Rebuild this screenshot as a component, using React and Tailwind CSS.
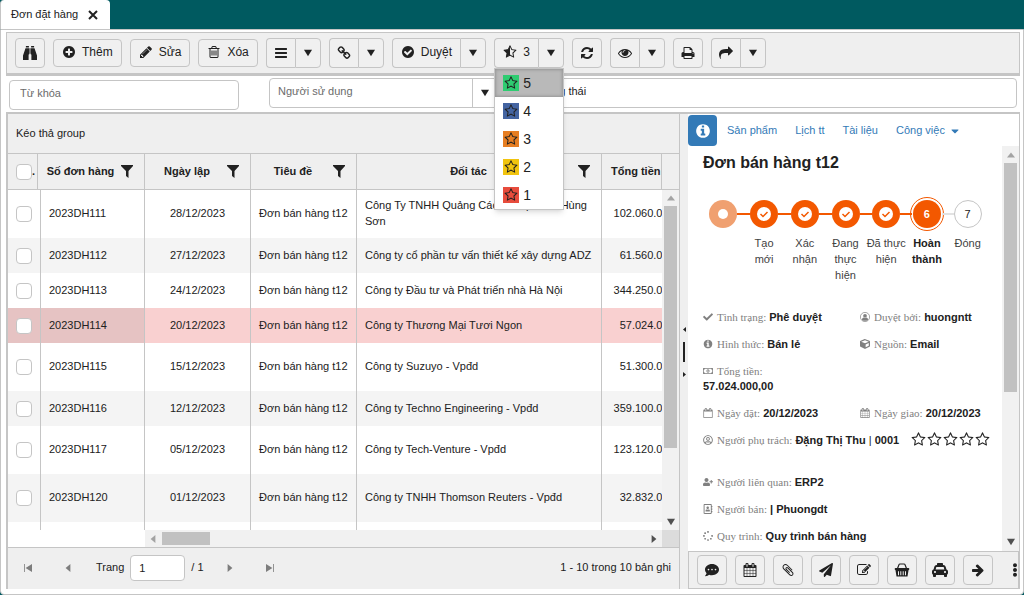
import { useState } from 'react';
import {
  FaCommentDots, FaPaperPlane, FaTaxi, FaEllipsisV,
  FaCheck, FaCube, FaUserPlus, FaSpinner, FaRegUserCircle,
  FaRegAddressBook, FaRegMoneyBillAlt, FaCaretDown
} from 'react-icons/fa';

const PATHS = {
  plus: "M1344 960v-128q0-26-19-45t-45-19h-256v-256q0-26-19-45t-45-19h-128q-26 0-45 19t-19 45v256h-256q-26 0-45 19t-19 45v128q0 26 19 45t45 19h256v256q0 26 19 45t45 19h128q26 0 45-19t19-45v-256h256q26 0 45-19t19-45zm320-64q0 209-103 385.5t-279.5 279.5-385.5 103-385.5-103-279.5-279.5-103-385.5 103-385.5 279.5-279.5 385.5-103 385.5 103 279.5 279.5 103 385.5z",
  pencil: "M491 1536l91-91-235-235-91 91v107h128v128h107zm523-928q0-22-22-22-10 0-17 7l-542 542q-7 7-7 17 0 22 22 22 10 0 17-7l542-542q7-7 7-17zm-54-192l416 416-832 832h-416v-416zm683 96q0 53-37 90l-166 166-416-416 166-165q36-38 90-38 53 0 91 38l235 234q37 39 37 91z",
  trash: "M704 736v576q0 14-9 23t-23 9h-64q-14 0-23-9t-9-23v-576q0-14 9-23t23-9h64q14 0 23 9t9 23zm256 0v576q0 14-9 23t-23 9h-64q-14 0-23-9t-9-23v-576q0-14 9-23t23-9h64q14 0 23 9t9 23zm256 0v576q0 14-9 23t-23 9h-64q-14 0-23-9t-9-23v-576q0-14 9-23t23-9h64q14 0 23 9t9 23zm128 724v-948h-896v948q0 22 7 40.5t14.5 27 10.5 8.5h832q3 0 10.5-8.5t14.5-27 7-40.5zm-672-1076h448l-48-117q-7-9-17-11h-317q-10 2-17 11zm928 32v64q0 14-9 23t-23 9h-96v948q0 83-47 143.5t-113 60.5h-832q-66 0-113-58.5t-47-141.5v-952h-96q-14 0-23-9t-9-23v-64q0-14 9-23t23-9h309l70-167q15-37 54-63t79-26h320q40 0 79 26t54 63l70 167h309q14 0 23 9t9 23z",
  bars: "M1664 1344v128q0 26-19 45t-45 19h-1408q-26 0-45-19t-19-45v-128q0-26 19-45t45-19h1408q26 0 45 19t19 45zm0-512v128q0 26-19 45t-45 19h-1408q-26 0-45-19t-19-45v-128q0-26 19-45t45-19h1408q26 0 45 19t19 45zm0-512v128q0 26-19 45t-45 19h-1408q-26 0-45-19t-19-45v-128q0-26 19-45t45-19h1408q26 0 45 19t19 45z",
  link: "M1520 1216q0-40-28-68l-208-208q-28-28-68-28-42 0-72 32 3 3 19 18.5t21.5 21.5 15 19 13 25.5 3.5 27.5q0 40-28 68t-68 28q-15 0-27.5-3.5t-25.5-13-19-15-21.5-21.5-18.5-19q-33 31-33 73 0 40 28 68l206 207q27 27 68 27 40 0 68-26l147-146q28-28 28-67zm-703-705q0-40-28-68l-206-207q-28-28-68-28-39 0-68 27l-147 146q-28 28-28 67 0 40 28 68l208 208q27 27 68 27 42 0 72-31-3-3-19-18.5t-21.5-21.5-15-19-13-25.5-3.5-27.5q0-40 28-68t68-28q15 0 27.5 3.5t25.5 13 19 15 21.5 21.5 18.5 19q33-31 33-73zm895 705q0 120-85 203l-147 146q-83 83-203 83-121 0-204-85l-206-207q-83-83-83-203 0-123 88-209l-88-88q-86 88-208 88-120 0-204-84l-208-208q-84-84-84-204t85-203l147-146q83-83 203-83 121 0 204 85l206 207q83 83 83 203 0 123-88 209l88 88q86-88 208-88 120 0 204 84l208 208q84 84 84 204z",
  check: "M1412 734q0-28-18-46l-91-90q-19-19-45-19t-45 19l-408 407-226-226q-19-19-45-19t-45 19l-91 90q-18 18-18 46 0 27 18 45l362 362q19 19 45 19 27 0 46-19l543-543q18-18 18-45zm252 162q0 209-103 385.5t-279.5 279.5-385.5 103-385.5-103-279.5-279.5-103-385.5 103-385.5 279.5-279.5 385.5-103 385.5 103 279.5 279.5 103 385.5z",
  refresh: "M1639 1056q0 5-1 7-64 268-268 434.5t-478 166.5q-146 0-282.5-55t-243.5-157l-129 129q-19 19-45 19t-45-19-19-45v-448q0-26 19-45t45-19h448q26 0 45 19t19 45-19 45l-137 137q71 66 161 102t187 36q134 0 250-65t186-179q11-17 53-117 8-23 30-23h192q13 0 22.5 9.5t9.5 22.5zm25-800v448q0 26-19 45t-45 19h-448q-26 0-45-19t-19-45 19-45l138-138q-148-137-349-137-134 0-250 65t-186 179q-11 17-53 117-8 23-30 23h-199q-13 0-22.5-9.5t-9.5-22.5v-7q65-268 270-434.5t480-166.5q146 0 284 55.5t245 156.5l130-129q19-19 45-19t45 19 19 45z",
  eye: "M1664 960q-152-236-381-353 61 104 61 225 0 185-131.5 316.5t-316.5 131.5-316.5-131.5-131.5-316.5q0-121 61-225-229 117-381 353 133 205 333.5 326.5t434.5 121.5 434.5-121.5 333.5-326.5zm-720-384q0-20-14-34t-34-14q-125 0-214.5 89.5t-89.5 214.5q0 20 14 34t34 14 34-14 14-34q0-86 61-147t147-61q20 0 34-14t14-34zm848 384q0 34-20 69-140 230-376.5 368.5t-499.5 138.5-499.5-139-376.5-368q-20-35-20-69t20-69q140-229 376.5-368t499.5-139 499.5 139 376.5 368q20 35 20 69z",
  print: "M448 1536h896v-256h-896v256zm0-640h896v-384h-160q-40 0-68-28t-28-68v-160h-640v640zm1152 64q0-26-19-45t-45-19-45 19-19 45 19 45 45 19 45-19 19-45zm128 0v416q0 13-9.5 22.5t-22.5 9.5h-224v160q0 40-28 68t-68 28h-960q-40 0-68-28t-28-68v-160h-224q-13 0-22.5-9.5t-9.5-22.5v-416q0-79 56.5-135.5t135.5-56.5h64v-544q0-40 28-68t68-28h672q40 0 88 20t76 48l152 152q28 28 48 76t20 88v256h64q79 0 135.5 56.5t56.5 135.5z",
  share: "M1792 640q0 26-19 45l-512 512q-19 19-45 19t-45-19-19-45v-256h-224q-98 0-175.5 6t-154 21.5-133 42.5-105.5 69.5-80 101-48.5 138.5-17.5 181q0 55 5 123 0 6 2.5 23.5t2.5 26.5q0 15-8.5 25t-23.5 10q-16 0-28-17-7-9-13-22t-13.5-30-10.5-24q-127-285-127-451 0-199 53-333 162-403 875-403h224v-256q0-26 19-45t45-19 45 19l512 512q19 19 19 45z",
  star: "M1201 1004l306-297-422-62-189-382-189 382-422 62 306 297-73 421 378-199 377 199zm527-357q0 22-26 48l-363 354 86 500q1 7 1 20 0 50-41 50-19 0-40-12l-449-236-449 236q-22 12-40 12-21 0-31.5-14.5t-10.5-35.5q0-6 2-20l86-500-364-354q-25-27-25-48 0-37 56-46l502-73 225-455q19-41 49-41t49 41l225 455 502 73q56 9 56 46z",
  calendar: "M192 1664h288v-288h-288v288zm352 0h320v-288h-320v288zm-352-352h288v-320h-288v320zm352 0h320v-320h-320v320zm-352-384h288v-288h-288v288zm736 736h320v-288h-320v288zm-384-736h320v-288h-320v288zm768 736h288v-288h-288v288zm-384-352h320v-320h-320v320zm-352-864v-288q0-13-9.5-22.5t-22.5-9.5h-64q-13 0-22.5 9.5t-9.5 22.5v288q0 13 9.5 22.5t22.5 9.5h64q13 0 22.5-9.5t9.5-22.5zm736 864h288v-320h-288v320zm-384-384h320v-288h-320v288zm384 0h288v-288h-288v288zm32-480v-288q0-13-9.5-22.5t-22.5-9.5h-64q-13 0-22.5 9.5t-9.5 22.5v288q0 13 9.5 22.5t22.5 9.5h64q13 0 22.5-9.5t9.5-22.5zm384-64v1280q0 52-38 90t-90 38h-1408q-52 0-90-38t-38-90v-1280q0-52 38-90t90-38h128v-96q0-66 47-113t113-47h64q66 0 113 47t47 113v96h384v-96q0-66 47-113t113-47h64q66 0 113 47t47 113v96h128q52 0 90 38t38 90z",
  calendarO: "M192 1664h1408v-1024h-1408v1024zm384-1216v-288q0-14-9-23t-23-9h-64q-14 0-23 9t-9 23v288q0 14 9 23t23 9h64q14 0 23-9t9-23zm768 0v-288q0-14-9-23t-23-9h-64q-14 0-23 9t-9 23v288q0 14 9 23t23 9h64q14 0 23-9t9-23zm384-64v1280q0 52-38 90t-90 38h-1408q-52 0-90-38t-38-90v-1280q0-52 38-90t90-38h128v-96q0-66 47-113t113-47h64q66 0 113 47t47 113v96h384v-96q0-66 47-113t113-47h64q66 0 113 47t47 113v96h128q52 0 90 38t38 90z",
  clip: "M1596 1385q0 117-79 196t-196 79q-135 0-235-100l-777-776q-113-115-113-271 0-159 110-270t269-111q158 0 273 113l605 606q10 10 10 22 0 16-30.5 46.5t-46.5 30.5q-13 0-23-10l-606-607q-79-77-181-77-106 0-179 75t-73 181q0 105 76 181l776 777q63 63 145 63 64 0 106-42t42-106q0-82-63-145l-581-581q-26-24-60-24-29 0-48 19t-19 48q0 32 25 59l410 410q10 10 10 22 0 16-31 47t-47 31q-12 0-22-10l-410-410q-63-61-63-149 0-82 57-139t139-57q88 0 149 63l581 581q100 98 100 235z",
  edit: "M888 1184l116-116-152-152-116 116v56h96v96h56zm440-720q-16-16-33 1l-350 350q-17 17-1 33t33-1l350-350q17-17 1-33zm80 594v190q0 119-84.5 203.5t-203.5 84.5h-832q-119 0-203.5-84.5t-84.5-203.5v-832q0-119 84.5-203.5t203.5-84.5h832q63 0 117 25 15 7 18 23 3 17-9 29l-49 49q-14 14-32 8-23-6-45-6h-832q-66 0-113 47t-47 113v832q0 66 47 113t113 47h832q66 0 113-47t47-113v-126q0-13 9-22l64-64q15-15 35-7t20 29zm-96-738l288 288-672 672h-288v-288zm444 132l-92 92-288-288 92-92q28-28 68-28t68 28l152 152q28 28 28 68t-28 68z",
  info: "M1152 1376v-160q0-14-9-23t-23-9h-96v-512q0-14-9-23t-23-9h-320q-14 0-23 9t-9 23v160q0 14 9 23t23 9h96v320h-96q-14 0-23 9t-9 23v160q0 14 9 23t23 9h448q14 0 23-9t9-23zm-128-896v-160q0-14-9-23t-23-9h-192q-14 0-23 9t-9 23v160q0 14 9 23t23 9h192q14 0 23-9t9-23zm640 416q0 209-103 385.5t-279.5 279.5-385.5 103-385.5-103-279.5-279.5-103-385.5 103-385.5 279.5-279.5 385.5-103 385.5 103 279.5 279.5 103 385.5z",
  arrow: "M1600 960q0 54-37 91l-651 651q-39 37-91 37-51 0-90-37l-75-75q-38-38-38-91t38-91l293-293h-704q-52 0-84.5-37.5t-32.5-90.5v-128q0-53 32.5-90.5t84.5-37.5h704l-293-294q-38-36-38-90t38-90l75-75q38-38 90-38 53 0 91 38l651 651q37 35 37 90z",
};

const Icon = ({ name, className = "size-3.5" }) => (
  <svg viewBox="0 0 1792 1792" fill="currentColor" className={className} aria-hidden="true">
    <path d={PATHS[name]} />
  </svg>
);

const HalfStar = () => (
  <svg viewBox="0 0 1792 1792" fill="currentColor" className="size-3.5" aria-hidden="true">
    <path d={PATHS.star} />
    <path d="M896 150L670 590L180 660L520 1010L440 1510L896 1280z" />
  </svg>
);

const Binoculars = () => (
  <svg viewBox="0 0 14 14" fill="currentColor" className="size-3.5" aria-hidden="true">
    <path d="M2.900 0h3v1.600h-3zM8.100 0h3v1.600h-3zM2.500 2.200h3.700v6.300h-.6V14H0V9.500zM11.500 2.200H7.800v6.300h.6V14H14V9.500zM6.600 2.200h.8v5.600h-.8z" />
  </svg>
);

const Basket = () => (
  <svg viewBox="0 0 16 16" className="size-4" aria-hidden="true">
    <path d="M3.500 6.500L5 2.600Q5.200 2 6 2h4q.8 0 1 .6l1.500 3.900" fill="none" stroke="currentColor" strokeWidth="1.200" />
    <path fill="currentColor" fillRule="evenodd" d="M1.500 6h13q.8 0 .8 1.100T14.500 8.300L13.500 14.500h-11L1.500 8.300Q.7 8.200.7 7.100T1.500 6zM4 9.300v3.900h1V9.300zM6.300 9.300v3.900h1V9.300zM8.700 9.300v3.900h1V9.300zM11 9.300v3.900h1V9.300z" />
  </svg>
);

const Person = () => (
  <svg viewBox="0 0 16 16" fill="currentColor" aria-hidden="true">
    <circle cx="8" cy="8" r="7.400" fill="none" stroke="currentColor" strokeWidth="1.100" />
    <circle cx="8" cy="6" r="3" />
    <path d="M3 12.600Q3.200 8.800 5.600 8.600Q8 10.400 10.400 8.600Q12.800 8.800 13 12.600Q8 15.600 3 12.600z" />
  </svg>
);

const ARROWS = {
  down: "M0 1h10L5 9z",
  up: "M0 8h10L5 2z",
  left: "M8 0v10L2 5z",
  right: "M2 0v10L8 5z",
  first: "M0 0h1v10H0zM10 0v10L2 5z",
  last: "M9 0h1v10H9zM0 0v10L8 5z",
};

const Arrow = ({ dir = "down", className = "size-2" }) => (
  <svg viewBox="0 0 10 10" fill="currentColor" className={className} aria-hidden="true">
    <path d={ARROWS[dir]} />
  </svg>
);

const Funnel = () => (
  <svg viewBox="0 0 12 13" fill="currentColor" className="h-[13px] w-3 shrink-0" aria-hidden="true">
    <path d="M0 0h12v1L7.500 6v7L5 11V6L0 1z" />
  </svg>
);

const BTN = "flex items-center justify-center border border-[#c5c5c5] bg-[#f0f0f0] hover:bg-[#e0e0e0]";

const ToolButton = ({ label, children }) => (
  <button aria-label={label} className={`${BTN} size-[30px] rounded`}>{children}</button>
);

const TextButton = ({ icon, text }) => (
  <button className={`${BTN} h-7 gap-1.5 rounded px-2 pb-0.5 text-xs`}>
    <Icon name={icon} /> {text}
  </button>
);

const SplitButton = ({ label, wide, children }) => (
  <div className="flex h-[30px]">
    <button
      aria-label={wide ? undefined : label}
      className={`${BTN} gap-1.5 rounded-l border-r-0 text-xs ${wide ? "px-2 pb-0.5" : "w-[29px]"}`}
    >
      {children}
    </button>
    <button aria-label={`${label}: thêm`} className={`${BTN} w-[26px] rounded-r`}>
      <Arrow />
    </button>
  </div>
);

const ratings = [
  { value: 5, color: "bg-[#2ecc71]" },
  { value: 4, color: "bg-[#4464a1]" },
  { value: 3, color: "bg-[#e67e22]" },
  { value: 2, color: "bg-[#f1c40f]" },
  { value: 1, color: "bg-[#e74c3c]" },
];

const RatingMenu = () => (
  <ul role="menu" className="absolute top-[30px] left-0 z-20 w-[70px] border border-[#c5c5c5] bg-white text-sm shadow-md">
    {ratings.map((r) => (
      <li key={r.value} role="none">
        <button
          role="menuitem"
          className={`flex h-7 w-full items-center gap-1 px-2 ${r.value === 5 ? "bg-[#b9b9b9] shadow-[inset_0_0_3px_1px_#969696]" : ""}`}
        >
          <span className={`flex size-4 items-center justify-center ${r.color}`}>
            <Icon name="star" />
          </span>
          {r.value}
        </button>
      </li>
    ))}
  </ul>
);

const Toolbar = () => (
  <div className="flex h-[42px] shrink-0 items-center gap-2 border border-[#c5c5c5] bg-[#efefef] px-2">
    <ToolButton label="Tìm kiếm"><Binoculars /></ToolButton>
    <TextButton icon="plus" text="Thêm" />
    <TextButton icon="pencil" text="Sửa" />
    <TextButton icon="trash" text="Xóa" />
    <SplitButton label="Danh sách"><Icon name="bars" /></SplitButton>
    <SplitButton label="Liên kết"><Icon name="link" /></SplitButton>
    <SplitButton label="Duyệt" wide><Icon name="check" /> Duyệt</SplitButton>
    <div className="relative">
      <SplitButton label="Đánh giá" wide><HalfStar /> 3</SplitButton>
      <RatingMenu />
    </div>
    <ToolButton label="Tải lại"><Icon name="refresh" /></ToolButton>
    <SplitButton label="Xem"><Icon name="eye" /></SplitButton>
    <ToolButton label="In"><Icon name="print" /></ToolButton>
    <SplitButton label="Chia sẻ"><Icon name="share" /></SplitButton>
  </div>
);

const SearchBar = () => (
  <div className="flex h-10 shrink-0 items-start gap-[30px] border-y-2 border-[#c5c5c5] bg-white px-[3px] pt-0.5">
    <input
      aria-label="Từ khóa"
      placeholder="Từ khóa"
      className="mt-0.5 h-[30px] w-[230px] rounded border border-[#c5c5c5] px-2.5 pb-1 placeholder:text-[#6b6b6b]"
    />
    <div className="flex h-[30px] w-[229px] rounded border border-[#c5c5c5]">
      <input
        aria-label="Người sử dụng"
        placeholder="Người sử dụng"
        className="min-w-0 flex-1 px-2 pb-1 placeholder:text-[#6b6b6b]"
      />
      <button aria-label="Chọn người sử dụng" className="flex w-[25px] items-center justify-center border-l border-[#c5c5c5]">
        <Arrow />
      </button>
    </div>
    <input
      aria-label="Trạng thái"
      defaultValue="Trạng thái"
      className="h-[30px] min-w-0 flex-1 rounded border border-[#c5c5c5] px-2 pb-1"
    />
  </div>
);

const orders = [
  { code: "2023DH111", date: "28/12/2023", partner: "Công Ty TNHH Quảng Cáo và Nội Thất Hùng Sơn", total: "102.060.000,00", tall: true },
  { code: "2023DH112", date: "27/12/2023", partner: "Công ty cổ phần tư vấn thiết kế xây dựng ADZ", total: "61.560.000,00" },
  { code: "2023DH113", date: "24/12/2023", partner: "Công ty Đầu tư và Phát triển nhà Hà Nội", total: "344.250.000,00" },
  { code: "2023DH114", date: "20/12/2023", partner: "Công ty Thương Mại Tươi Ngon", total: "57.024.000,00" },
  { code: "2023DH115", date: "15/12/2023", partner: "Công ty Suzuyo - Vpđd", total: "51.300.000,00", tall: true },
  { code: "2023DH116", date: "12/12/2023", partner: "Công ty Techno Engineering - Vpđd", total: "359.100.000,00" },
  { code: "2023DH117", date: "05/12/2023", partner: "Công ty Tech-Venture - Vpđd", total: "123.120.000,00", tall: true },
  { code: "2023DH120", date: "01/12/2023", partner: "Công ty TNHH Thomson Reuters - Vpđd", total: "32.832.000,00", tall: true },
];

const Tick = ({ label }) => (
  <input
    type="checkbox"
    aria-label={label}
    className="block size-4 shrink-0 appearance-none rounded border border-[#c5c5c5] bg-white checked:bg-[#337ab7]"
  />
);

const HeadCell = ({ width, children }) => (
  <th className={`border-r border-[#c5c5c5] py-0 pr-[11px] pl-2 font-bold ${width}`}>
    <div className="flex items-center">
      <span className="flex-1 pr-1.5 text-center whitespace-nowrap">{children}</span>
      <Funnel />
    </div>
  </th>
);

const OrderTable = ({ selected, onSelect }) => (
  <div className="flex min-h-0 flex-1 flex-col">
    <div className="flex h-[37px] shrink-0 border-y border-[#c5c5c5]">
      <div className="min-w-0 flex-1 overflow-hidden border-r border-[#c5c5c5]">
        <table className="h-full w-[690px] table-fixed border-separate border-spacing-0">
          <thead>
            <tr>
              <th className="w-[30px] border-r border-[#c5c5c5] py-0 pr-0 pl-2">
                <div className="flex items-center"><Tick label="Chọn tất cả" />.</div>
              </th>
              <HeadCell width="w-[107px]">Số đơn hàng</HeadCell>
              <HeadCell width="w-[106px]">Ngày lập</HeadCell>
              <HeadCell width="w-[106px]">Tiêu đề</HeadCell>
              <HeadCell width="w-[245px]">Đối tác</HeadCell>
              <th className="w-24 py-0 pl-[9px] text-left font-bold whitespace-nowrap">Tổng tiền</th>
            </tr>
          </thead>
        </table>
      </div>
      <div className="w-[17px] shrink-0" />
    </div>

    <div className="flex min-h-0 flex-1 bg-white">
      <div className="min-w-0 flex-1 overflow-hidden">
        <table className="w-[690px] table-fixed border-separate border-spacing-0 leading-4">
          <colgroup>
            <col className="w-[33px]" />
            <col className="w-[104px]" />
            <col className="w-[106px]" />
            <col className="w-[106px]" />
            <col className="w-[245px]" />
            <col className="w-24" />
          </colgroup>
          <tbody>
            {orders.map((o, i) => {
              const active = o.code === selected;
              const stripe = i % 2 ? "bg-[#f4f4f4]" : "bg-white";
              return (
                <tr
                  key={o.code}
                  onClick={() => onSelect(o.code)}
                  className={`${o.tall ? "h-12" : "h-[35px]"} ${active ? "bg-[#f9d0d0]" : stripe}`}
                >
                  <td className={`border-r border-[#c5c5c5] py-0 pr-0 pl-2 ${active ? "bg-[#e6c3c3]" : ""}`}>
                    <Tick label={`Chọn ${o.code}`} />
                  </td>
                  <td className={`border-r border-[#c5c5c5] px-2 pt-0 pb-0.5 ${active ? "bg-[#e6c3c3]" : ""}`}>{o.code}</td>
                  <td className="border-r border-[#c5c5c5] px-2 pt-0 pb-0.5 text-center">{o.date}</td>
                  <td className="border-r border-[#c5c5c5] px-2 pt-0 pb-0.5 whitespace-nowrap">Đơn bán hàng t12</td>
                  <td className="border-r border-[#c5c5c5] px-2 pt-0 pb-0.5">{o.partner}</td>
                  <td className="px-2 pt-0 pb-0.5 text-right">{o.total}</td>
                </tr>
              );
            })}
            <tr className="h-12">
              {[0, 1, 2, 3, 4].map((c) => <td key={c} className="border-r border-[#c5c5c5]" />)}
              <td />
            </tr>
          </tbody>
        </table>
      </div>
      <div className="flex w-[17px] shrink-0 flex-col items-center justify-between bg-[#f1f1f1] pt-1 pb-1">
        <Arrow dir="up" className="size-2 text-[#a3a3a3]" />
        <div className="mt-1 mb-auto h-[73%] w-[13px] bg-[#c1c1c1]" />
        <Arrow className="size-2 text-[#505050]" />
      </div>
    </div>

    <div className="flex h-[17px] shrink-0 bg-white">
      <div className="w-[137px] shrink-0" />
      <div className="flex flex-1 items-center bg-[#f1f1f1] px-1">
        <Arrow dir="left" className="size-2 text-[#a3a3a3]" />
        <div className="mr-auto ml-[5px] h-[13px] w-12 bg-[#c1c1c1]" />
        <Arrow dir="right" className="size-2 text-[#505050]" />
      </div>
      <div className="w-[17px] bg-[#dcdcdc]" />
    </div>
  </div>
);

const PagerButton = ({ dir, label }) => (
  <button aria-label={label} className="flex size-10 items-center justify-center text-[#7d7d7d]">
    <Arrow dir={dir} />
  </button>
);

const Pager = () => (
  <div className="flex h-[42px] shrink-0 items-center border-t border-[#c5c5c5] pb-0.5">
    <PagerButton dir="first" label="Trang đầu" />
    <PagerButton dir="left" label="Trang trước" />
    <label htmlFor="page" className="ml-2">Trang</label>
    <input id="page" defaultValue="1" className="mx-1.5 h-[26px] w-[55px] rounded border border-[#c5c5c5] bg-white px-2" />
    <span className="mr-1.5">/ 1</span>
    <PagerButton dir="right" label="Trang sau" />
    <PagerButton dir="last" label="Trang cuối" />
    <span className="mr-2 ml-auto">1 - 10 trong 10 bản ghi</span>
  </div>
);

const steps = ["", "Tạo mới", "Xác nhận", "Đang thực hiện", "Đã thực hiện", "Hoàn thành", "Đóng"];

const StepMark = ({ index }) => {
  if (index === 0) {
    return (
      <span className="flex size-7 items-center justify-center rounded-full bg-[#f0a070]">
        <span className="size-2.5 rounded-full bg-white" />
      </span>
    );
  }
  if (index < 5) {
    return (
      <span className="flex size-7 items-center justify-center rounded-full bg-[#f35800] text-[#f35800]">
        <span className="flex size-3.5 items-center justify-center rounded-full bg-white">
          <svg viewBox="0 0 10 10" fill="none" stroke="currentColor" strokeWidth="1.500" className="size-2.5">
            <path d="M1.500 5L4 7.500L8.500 3" />
          </svg>
        </span>
      </span>
    );
  }
  if (index === 5) {
    return (
      <span className="-mx-0.5 flex size-[34px] items-center justify-center rounded-full border border-[#f35800] p-0.5">
        <span className="flex size-7 items-center justify-center rounded-full bg-[#f35800] font-bold text-white">6</span>
      </span>
    );
  }
  return <span className="flex size-7 items-center justify-center rounded-full border border-[#c5c5c5]">7</span>;
};

const Stepper = () => (
  <ol className="mt-[22px] grid max-w-[285px] grid-cols-7 text-center leading-4">
    {steps.map((label, i) => (
      <li key={i} className="min-w-0">
        <div className="flex h-[34px] items-center">
          <span className={`h-0.5 flex-1 ${i === 0 ? "" : i === 6 ? "bg-[#e2e2e2]" : "bg-[#f35800]"}`} />
          <StepMark index={i} />
          <span className={`h-0.5 flex-1 ${i === 6 ? "" : i === 5 ? "bg-[#e2e2e2]" : "bg-[#f35800]"}`} />
        </div>
        <p className={`mt-1 ${i === 5 ? "font-bold" : "text-[#424242]"}`}>{label}</p>
      </li>
    ))}
  </ol>
);

const Field = ({ icon, label, value, children }) => (
  <p className="min-h-[27px] pt-1 leading-4">
    <span className="font-['Liberation_Serif',serif] text-[#808080]">
      <span className="mr-1 inline-block align-[-1px] [&>svg]:size-2.5">{icon}</span>
      {label}:
    </span>{' '}
    <b>{value}</b>
    {children}
  </p>
);

const Details = () => (
  <div className="mt-[22px]">
    <div className="grid grid-cols-[157px_1fr]">
      <Field icon={<FaCheck />} label="Tình trạng" value="Phê duyệt" />
      <Field icon={<Person />} label="Duyệt bởi" value="huongntt" />
      <Field icon={<Icon name="info" />} label="Hình thức" value="Bán lẻ" />
      <Field icon={<FaCube />} label="Nguồn" value="Email" />
      <div className="col-span-2 h-[42px]">
        <Field icon={<FaRegMoneyBillAlt />} label="Tổng tiền" />
        <b className="-mt-2 block leading-4">57.024.000,00</b>
      </div>
      <Field icon={<Icon name="calendarO" />} label="Ngày đặt" value="20/12/2023" />
      <Field icon={<Icon name="calendar" />} label="Ngày giao" value="20/12/2023" />
    </div>
    <div className="flex items-start">
      <Field icon={<FaRegUserCircle />} label="Người phụ trách" value="Đặng Thị Thu">
        {' | '}<b>0001</b>
      </Field>
      <div className="ml-3 flex gap-px pt-1">
        {[1, 2, 3, 4, 5].map((n) => (
          <button key={n} aria-label={`${n} sao`}><Icon name="star" className="size-[15px]" /></button>
        ))}
      </div>
    </div>
    <div className="mt-[15px]">
      <Field icon={<FaUserPlus />} label="Người liên quan" value="ERP2" />
      <Field icon={<FaRegAddressBook />} label="Người bán" value="| Phuongdt" />
      <Field icon={<FaSpinner />} label="Quy trình" value="Quy trình bán hàng" />
    </div>
  </div>
);

const actions = [
  ["Bình luận", <FaCommentDots className="size-3.5" />],
  ["Lịch", <Icon name="calendar" />],
  ["Đính kèm", <Icon name="clip" />],
  ["Gửi", <FaPaperPlane className="size-3.5" />],
  ["Ghi chú", <Icon name="edit" />],
  ["Mua hàng", <Basket />],
  ["Vận chuyển", <FaTaxi className="size-4" />],
  ["Tiếp", <Icon name="arrow" />],
];

const DetailPanel = () => (
  <aside className="flex w-[331px] shrink-0 flex-col bg-white pt-px">
    <nav className="flex h-[31px] shrink-0 items-center gap-[18px] text-[#337ab7]">
      <a href="#info" aria-label="Thông tin" className="-mr-2 flex h-full w-[29px] items-center justify-center rounded bg-[#337ab7] text-white">
        <Icon name="info" className="size-4" />
      </a>
      <a href="#products">Sản phẩm</a>
      <a href="#payment">Lịch tt</a>
      <a href="#docs">Tài liệu</a>
      <a href="#tasks" className="flex items-center gap-1">Công việc <FaCaretDown className="size-3" /></a>
    </nav>
    <div className="flex min-h-0 flex-1">
      <div className="min-w-0 flex-1 overflow-hidden pt-[5px] pl-[15px]">
        <h1 className="text-base leading-6 font-bold">Đơn bán hàng t12</h1>
        <Stepper />
        <Details />
      </div>
      <div className="flex w-[17px] shrink-0 flex-col items-center justify-between bg-[#f1f1f1] py-[5px]">
        <Arrow dir="up" className="size-2 text-[#a3a3a3]" />
        <div className="mt-1 mb-auto h-[58%] w-[13px] bg-[#c1c1c1]" />
        <Arrow className="size-2 text-[#505050]" />
      </div>
    </div>
    <div className="flex h-[38px] shrink-0 items-center gap-2 border border-[#c5c5c5] bg-[#efefef] pl-2">
      {actions.map(([label, icon]) => (
        <ToolButton key={label} label={label}>{icon}</ToolButton>
      ))}
      <button aria-label="Thêm" className="-mr-1 ml-auto"><FaEllipsisV className="size-3.5" /></button>
    </div>
  </aside>
);

const App = () => {
  const [selected, setSelected] = useState("2023DH114");

  return (
    <div className="flex h-screen flex-col bg-[#005a60] font-['Liberation_Sans',Arial,sans-serif] text-[11px] text-[#212121]">
      <div className="flex h-[29px] shrink-0 items-center">
        <div className="flex h-full items-center gap-2.5 rounded-t border-l border-[#c5c5c5] bg-white pr-3 pl-2.5">
          <span>Đơn đặt hàng</span>
          <button aria-label="Đóng tab">
            <svg viewBox="0 0 10 10" stroke="currentColor" strokeWidth="2" className="size-2.5">
              <path d="M1 1L9 9M9 1L1 9" />
            </svg>
          </button>
        </div>
      </div>

      <main className="flex min-h-0 flex-1 flex-col rounded-b border border-[#c5c5c5] bg-white pt-0.5 pr-[3px] pb-[5px] pl-[5px]">
        <Toolbar />
        <SearchBar />
        <div className="flex min-h-0 flex-1 border-x border-[#c5c5c5]">
          <section className="flex min-w-0 flex-1 flex-col border-x border-[#c5c5c5] bg-[#efefef]">
            <p className="flex h-[39px] shrink-0 items-center px-2">Kéo thả group</p>
            <OrderTable selected={selected} onSelect={setSelected} />
            <Pager />
          </section>
          <div className="flex w-2 shrink-0 flex-col items-center justify-center gap-2.5 bg-[#efefef]">
            <Arrow dir="left" className="size-[5px]" />
            <span className="h-5 w-0.5 bg-[#212121]" />
            <Arrow dir="right" className="size-[5px]" />
          </div>
          <DetailPanel />
        </div>
      </main>
    </div>
  );
};

export default App;
